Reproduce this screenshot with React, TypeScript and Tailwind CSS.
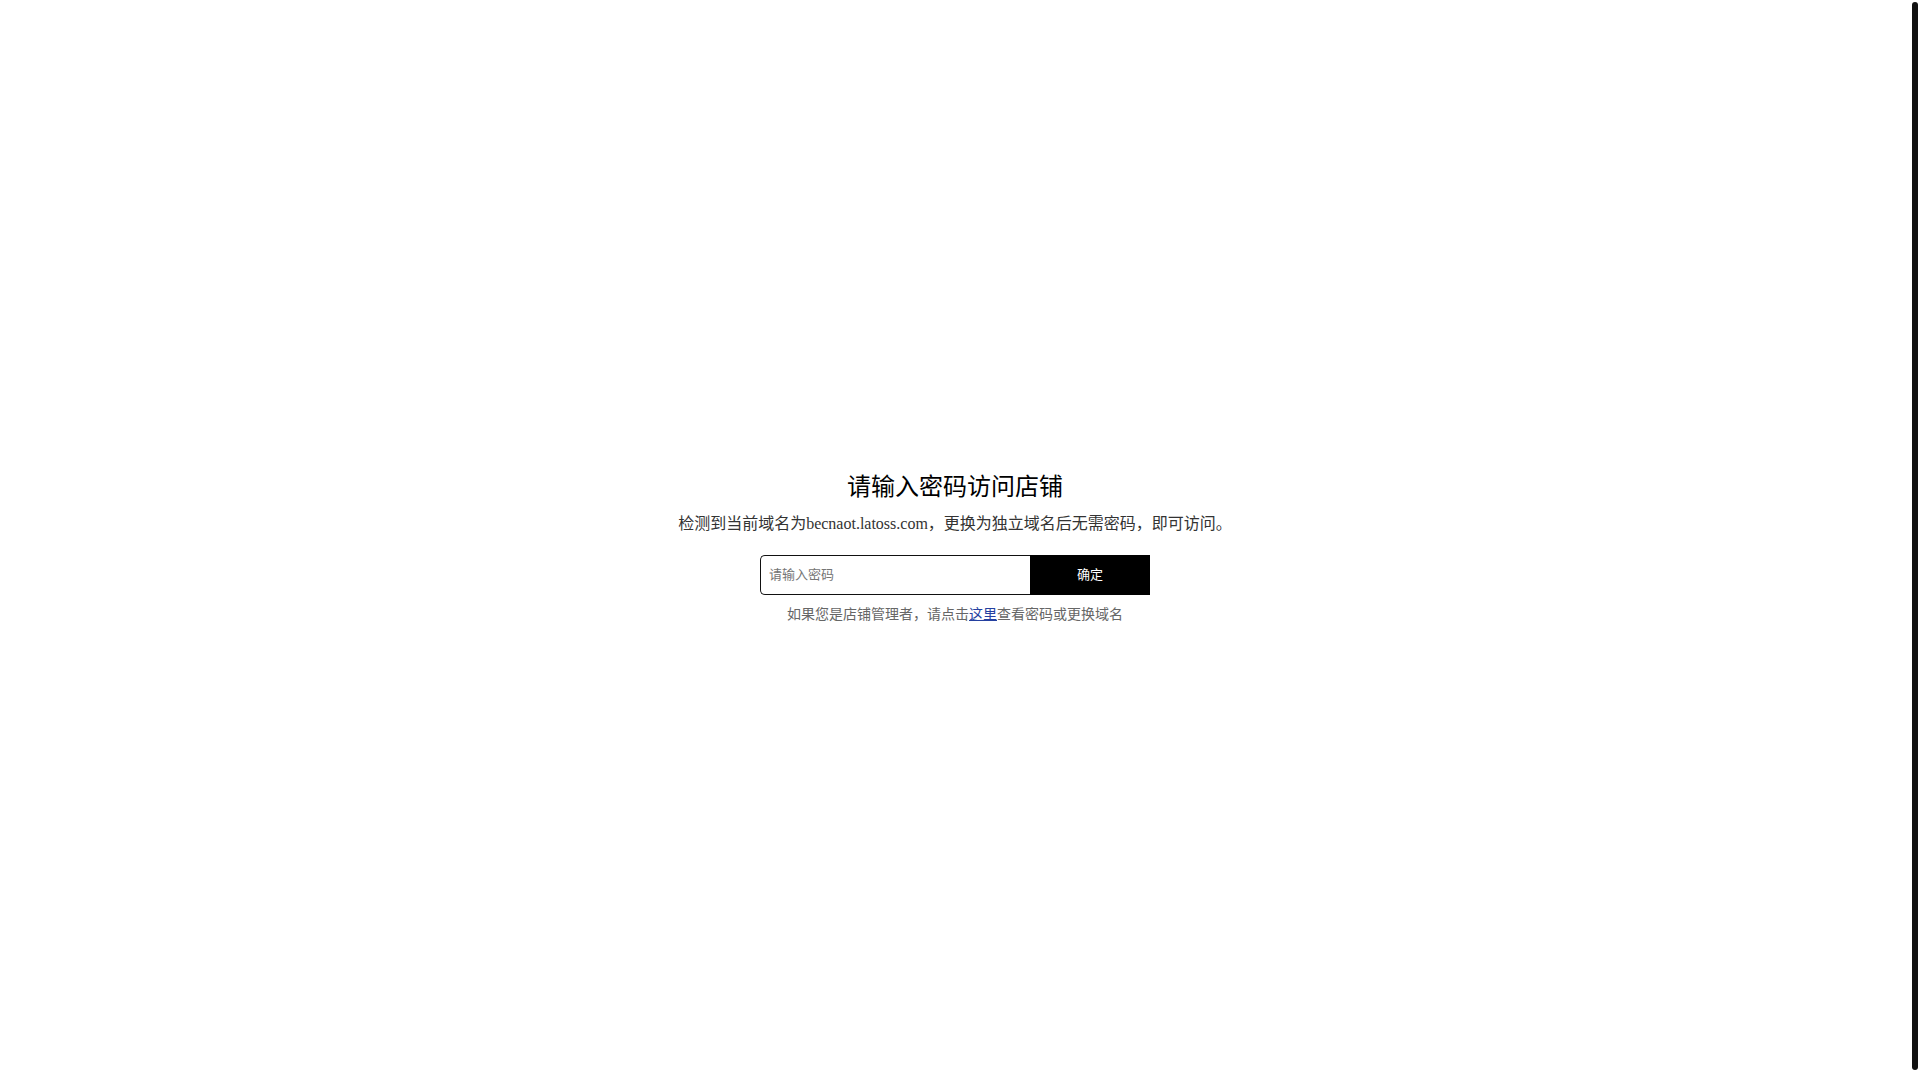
export default function App() {
  return (
    <div className="flex h-screen bg-white font-['Liberation_Serif','Noto_Sans_CJK_SC',serif]">
      <main className="flex flex-1 flex-col items-center justify-center pt-4">
        <h1 className="text-2xl text-black">请输入密码访问店铺</h1>
        <p className="mt-2 text-base leading-[26px] text-[#333333]">
          检测到当前域名为becnaot.latoss.com，更换为独立域名后无需密码，即可访问。
        </p>
        <form className="mt-[18px] flex h-10 w-[390px]">
          <input
            type="password"
            aria-label="请输入密码"
            placeholder="请输入密码"
            className="min-w-0 flex-1 rounded-l-[5px] border border-r-0 border-[#111111] px-2 text-[13px] placeholder:text-[#757575]"
          />
          <button type="button" className="w-30 bg-black text-[13px] text-white">
            确定
          </button>
        </form>
        <p className="mt-2.5 text-sm text-[#666666]">
          如果您是店铺管理者，请点击
          <a href="#" className="text-[#2440a0] underline">
            这里
          </a>
          查看密码或更换域名
        </p>
      </main>

      {/* Scroll thumb */}
      <div className="mx-0.5 mt-0.5 mb-2.5 w-1.5 rounded-full bg-[#111111]" />
    </div>
  );
}
